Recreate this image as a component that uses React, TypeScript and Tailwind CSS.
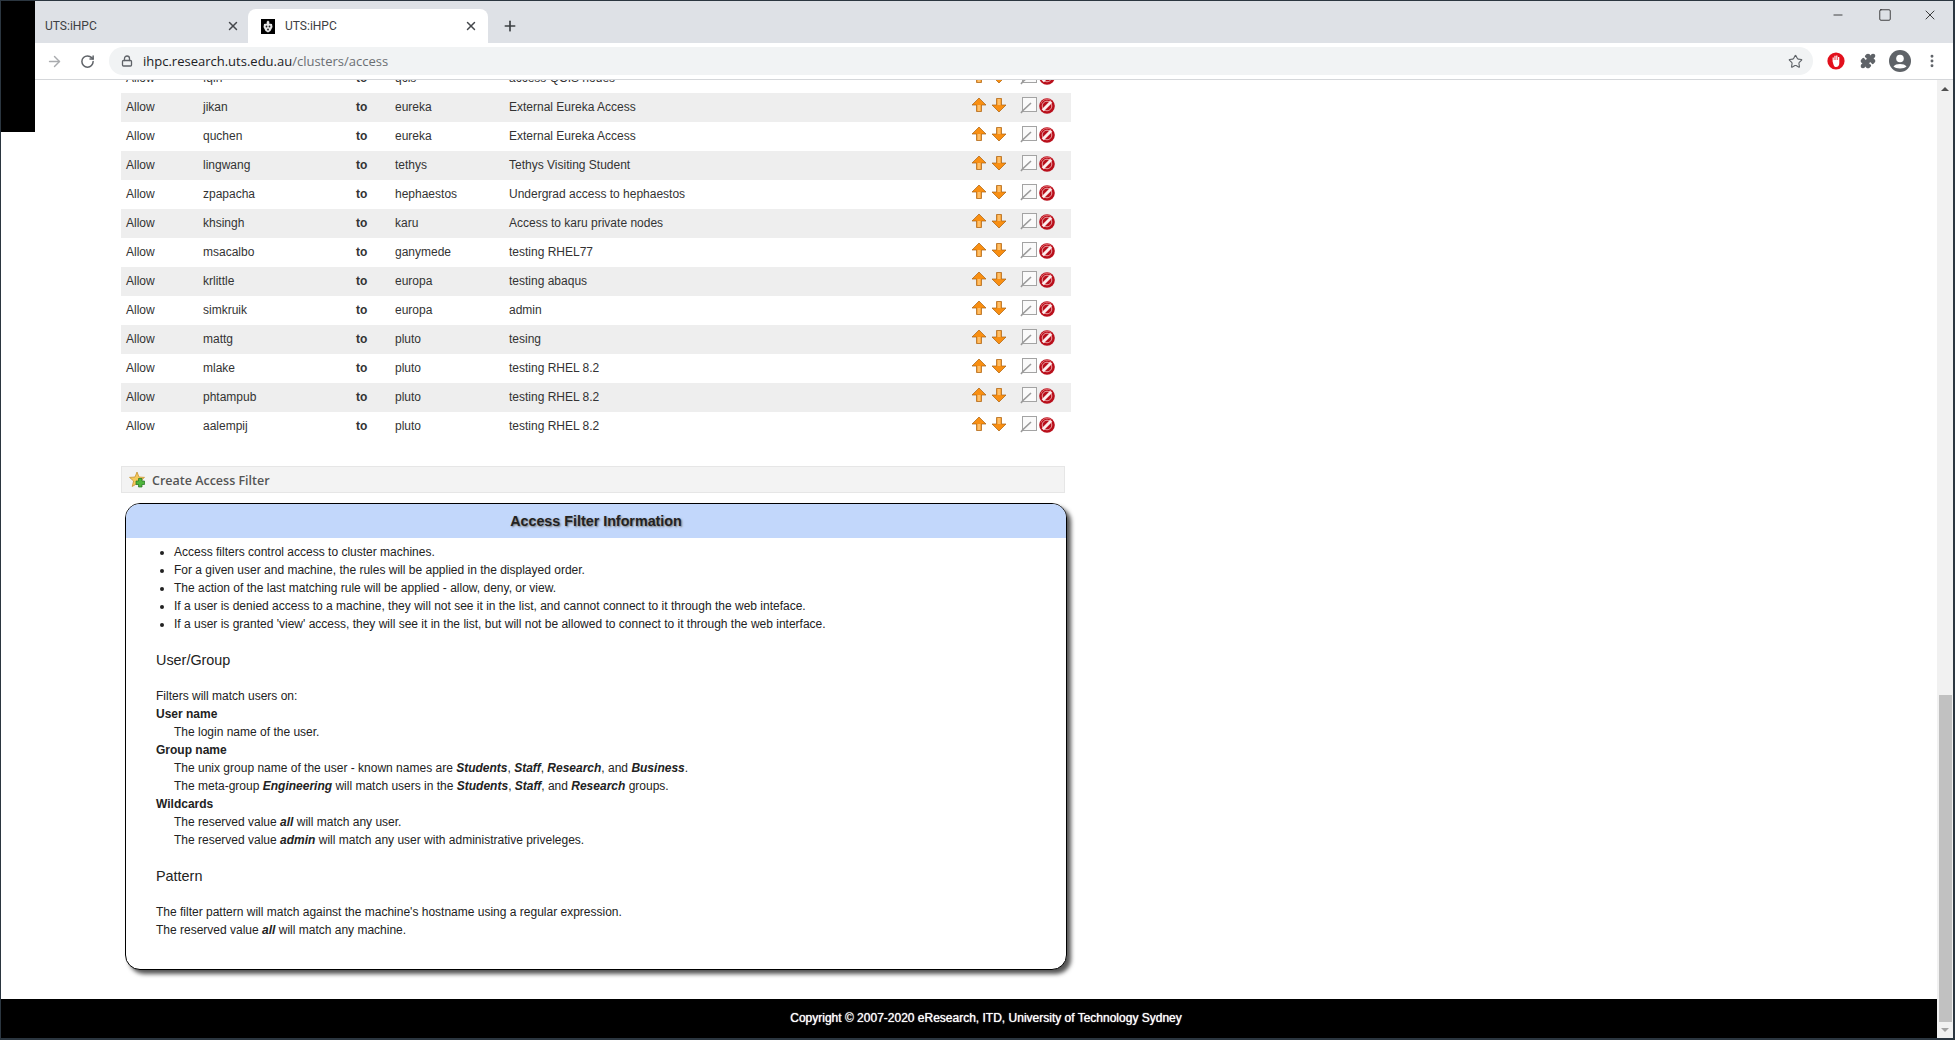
import React from "react";
import { ArrowRight, RotateCw, Lock, Star, X, Plus, Minus, Square, Puzzle, MoreVertical } from "lucide-react";

const rows = [
    ["fqin", "qcis", "access QCIS nodes"],
    ["jikan", "eureka", "External Eureka Access"],
    ["quchen", "eureka", "External Eureka Access"],
    ["lingwang", "tethys", "Tethys Visiting Student"],
    ["zpapacha", "hephaestos", "Undergrad access to hephaestos"],
    ["khsingh", "karu", "Access to karu private nodes"],
    ["msacalbo", "ganymede", "testing RHEL77"],
    ["krlittle", "europa", "testing abaqus"],
    ["simkruik", "europa", "admin"],
    ["mattg", "pluto", "tesing"],
    ["mlake", "pluto", "testing RHEL 8.2"],
    ["phtampub", "pluto", "testing RHEL 8.2"],
    ["aalempij", "pluto", "testing RHEL 8.2"],
];

const bullets = [
    "Access filters control access to cluster machines.",
    "For a given user and machine, the rules will be applied in the displayed order.",
    "The action of the last matching rule will be applied - allow, deny, or view.",
    "If a user is denied access to a machine, they will not see it in the list, and cannot connect to it through the web inteface.",
    "If a user is granted 'view' access, they will see it in the list, but will not be allowed to connect to it through the web interface.",
];

const UpArrow = () => (
    <svg width="16" height="16" viewBox="0 0 16 16">
        <path d="M8 1 L15 8 L10.5 8 L10.5 14.5 L5.5 14.5 L5.5 8 L1 8 Z" fill="#f98f12" stroke="#a9600f" strokeWidth="0.7" />
        <path d="M6.5 8 L6.5 14 L9.5 14 L9.5 8 Z" fill="#fdbf6a" />
    </svg>
);

const DownArrow = () => (
    <svg width="16" height="16" viewBox="0 0 16 16">
        <path d="M8 15 L15 8 L10.5 8 L10.5 1.5 L5.5 1.5 L5.5 8 L1 8 Z" fill="#f98f12" stroke="#a9600f" strokeWidth="0.7" />
        <path d="M6.5 2 L6.5 8 L9.5 8 L9.5 2 Z" fill="#fdbf6a" />
    </svg>
);

const EditIcon = () => (
    <svg width="17" height="17" viewBox="0 0 17 17">
        <rect x="2.5" y="0.5" width="14" height="14" fill="#fafafa" stroke="#a3a3a3" />
        <path d="M1 16 L2.5 14 L11 6" fill="none" stroke="#9a9a9a" strokeWidth="1.6" />
    </svg>
);

const DeleteIcon = () => (
    <svg width="16" height="16" viewBox="0 0 16 16">
        <circle cx="8" cy="8" r="7.8" fill="#b90f1b" />
        <circle cx="8" cy="8" r="4.8" fill="none" stroke="#e8a0a4" strokeWidth="1" />
        <path d="M3.8 12.2 L12.2 3.8" stroke="#fbeeee" strokeWidth="3" />
        <path d="M2 5.5 A6.5 6.5 0 0 1 12.5 3" fill="none" stroke="#e66a70" strokeWidth="1" />
    </svg>
);

const CreateIcon = () => (
    <svg width="17" height="17" viewBox="0 0 17 17">
        <path d="M8 1 L10 6 L15.5 6.4 L11.4 10 L12.8 15.5 L8 12.6 L3.2 15.5 L4.6 10 L0.5 6.4 L6 6 Z" fill="#f4c95c" stroke="#c08a24" strokeWidth="0.7" />
        <path d="M9.5 7.5 H13 V10 H15.5 V13.5 H13 V16 H9.5 V13.5 H7 V10 H9.5 Z" fill="#4fb53c" stroke="#23701c" strokeWidth="0.7" />
    </svg>
);

const Favicon = () => (
    <svg width="14" height="15" viewBox="0 0 14 15">
        <rect width="14" height="15" fill="#000" />
        <path d="M7 1.5 L8.5 3 L8 4.5 L11 5 L11.5 8 L9.5 12 L7 13.5 L4.5 12 L2.5 8 L3 5 L6 4.5 L5.5 3 Z" fill="#e8e8e8" />
        <circle cx="5.5" cy="7.5" r="0.9" fill="#222" />
        <circle cx="8.5" cy="7.5" r="0.9" fill="#222" />
        <circle cx="7" cy="10.5" r="0.9" fill="#222" />
    </svg>
);

const StopIcon = () => (
    <svg width="18" height="18" viewBox="0 0 18 18">
        <circle cx="9" cy="9" r="8.6" fill="#e2101c" />
        <path d="M5.6 9.5 L5.6 5.5 L6.8 5.5 L6.8 8 L7.4 8 L7.4 3.8 L8.6 3.8 L8.6 8 L9.2 8 L9.2 3.4 L10.4 3.4 L10.4 8 L11 8 L11 5 L12.3 5 L12.3 11 C12.3 13.5 11 15 9 15 C7.4 15 6.8 14 5.6 9.5 Z" fill="#fff" />
    </svg>
);

const Avatar = () => (
    <svg width="22" height="22" viewBox="0 0 22 22">
        <circle cx="11" cy="11" r="11" fill="#5f6368" />
        <circle cx="11" cy="8.5" r="3.8" fill="#fff" />
        <path d="M4.5 16.5 C6.5 13.2 15.5 13.2 17.5 16.5 C15.5 19 6.5 19 4.5 16.5 Z" fill="#fff" />
    </svg>
);

const Chrome = () => (
    <div className="shrink-0">
        <div className="flex h-[42px] items-end bg-[#dee1e6] pl-[34px]">
            <div className="flex h-[34px] w-[213px] items-center pl-[10px] pr-[8px]">
                <span className="flex-1 font-['Roboto',sans-serif] text-[12px] text-[#3c4043]">UTS:iHPC</span>
                <X size={14} strokeWidth={2.5} className="text-[#45484c]" />
            </div>
            <div className="flex h-[34px] w-[240px] items-center rounded-t-lg bg-white pl-[13px] pr-[10px]">
                <Favicon />
                <span className="ml-[10px] flex-1 font-['Roboto',sans-serif] text-[12px] text-[#3c4043]">UTS:iHPC</span>
                <X size={14} strokeWidth={2.5} className="text-[#45484c]" />
            </div>
            <Plus size={16} strokeWidth={2.5} className="mb-[9px] ml-[14px] text-[#3c4043]" />
            <div className="ml-auto flex self-start text-[#111]">
                <div className="flex h-[28px] w-[46px] items-center justify-center">
                    <Minus size={14} strokeWidth={1.3} />
                </div>
                <div className="flex h-[28px] w-[46px] items-center justify-center pl-[1px]">
                    <Square size={14} strokeWidth={1.3} />
                </div>
                <div className="flex h-[28px] w-[46px] items-center justify-center">
                    <X size={16} strokeWidth={1.2} />
                </div>
            </div>
        </div>
        <div className="flex h-[37px] items-center border-b border-[#d5d7da] bg-white pl-[45px] pr-[13px]">
            <ArrowRight size={17} strokeWidth={2} className="text-[#a9abae]" />
            <RotateCw size={15} strokeWidth={2.4} className="ml-[17px] text-[#5f6368]" />
            <div className="ml-[14px] flex h-[28px] flex-1 items-center rounded-full bg-[#f1f3f4] pl-[12px] pr-[10px] font-['Open_Sans',sans-serif] text-[13px]">
                <Lock size={12} strokeWidth={2.6} className="text-[#5f6368]" />
                <span className="ml-[10px] text-[#202124]">ihpc.research.uts.edu.au</span>
                <span className="text-[#6b6f73]">/clusters/access</span>
                <Star size={15} strokeWidth={1.8} className="ml-auto text-[#5f6368]" />
            </div>
            <span className="ml-[14px]">
                <StopIcon />
            </span>
            <Puzzle size={16} fill="#5f6368" className="ml-[15px] text-[#5f6368]" />
            <span className="ml-[13px]">
                <Avatar />
            </span>
            <MoreVertical size={16} strokeWidth={2.4} className="ml-[13px] text-[#5f6368]" />
        </div>
    </div>
);

const FilterRow = ({ row, shaded }: { row: string[]; shaded: boolean }) => (
    <div
        className={
            "grid h-[29px] grid-cols-[77px_153px_39px_114px_462px_36px_1fr] items-center pb-[2px] pl-[5px] " +
            (shaded ? "bg-[#eeeeee]" : "bg-white")
        }
    >
        <span>Allow</span>
        <span>{row[0]}</span>
        <span className="font-bold">to</span>
        <span>{row[1]}</span>
        <span>{row[2]}</span>
        <span className="flex -translate-y-[2px] gap-[4px]">
            <UpArrow />
            <DownArrow />
        </span>
        <span className="flex -translate-y-[1px] items-center gap-[2px] pl-[13px]">
            <EditIcon />
            <DeleteIcon />
        </span>
    </div>
);

const AccessTable = () => (
    <div className="ml-[120px] mt-[-16px] w-[950px] text-[#333]">
        {rows.map((row, i) => (
            <FilterRow key={row[0]} row={row} shaded={i % 2 === 1} />
        ))}
    </div>
);

const InfoBox = () => (
    <div className="ml-[124px] mt-[10px] h-[467px] w-[942px] overflow-hidden rounded-[15px] border border-black bg-white text-[#222] shadow-[4px_4px_4px_#555]">
        <div className="flex h-[34px] items-center justify-center bg-[#c2d7fb] text-[14.3px] font-bold text-[#222] [text-shadow:1px_1px_2px_#777]">
            Access Filter Information
        </div>
        <ul className="ml-[48px] mt-[5px] list-disc">
            {bullets.map((b) => (
                <li key={b}>{b}</li>
            ))}
        </ul>
        <div className="pl-[30px]">
            <h3 className="mb-[18px] mt-[18px] text-[14.4px]">User/Group</h3>
            <p>Filters will match users on:</p>
            <dl>
                <dt className="font-bold">User name</dt>
                <dd className="pl-[18px]">The login name of the user.</dd>
                <dt className="font-bold">Group name</dt>
                <dd className="pl-[18px]">
                    The unix group name of the user - known names are <b><i>Students</i></b>, <b><i>Staff</i></b>, <b><i>Research</i></b>, and <b><i>Business</i></b>.
                </dd>
                <dd className="pl-[18px]">
                    The meta-group <b><i>Engineering</i></b> will match users in the <b><i>Students</i></b>, <b><i>Staff</i></b>, and <b><i>Research</i></b> groups.
                </dd>
                <dt className="font-bold">Wildcards</dt>
                <dd className="pl-[18px]">The reserved value <b><i>all</i></b> will match any user.</dd>
                <dd className="pl-[18px]">The reserved value <b><i>admin</i></b> will match any user with administrative priveleges.</dd>
            </dl>
            <h3 className="mb-[18px] mt-[18px] text-[14.4px]">Pattern</h3>
            <p>The filter pattern will match against the machine's hostname using a regular expression.</p>
            <p>The reserved value <b><i>all</i></b> will match any machine.</p>
        </div>
    </div>
);

const Scrollbar = () => (
    <div className="flex w-[16px] shrink-0 flex-col items-center bg-[#f1f1f1]">
        <div className="flex h-[17px] shrink-0 items-center justify-center">
            <div className="h-0 w-0 border-x-[4px] border-b-[4px] border-x-transparent border-b-[#505050]" />
        </div>
        <div className="flex-1" />
        <div className="h-[327px] w-[13px] bg-[#c1c1c1]" />
        <div className="flex h-[16px] shrink-0 items-center justify-center">
            <div className="h-0 w-0 border-x-[4px] border-t-[4px] border-x-transparent border-t-[#a3a3a3]" />
        </div>
    </div>
);

export default function App() {
    return (
        <div className="relative flex h-[1040px] w-[1955px] flex-col overflow-hidden border-b-2 border-l border-r-2 border-t border-[#2b3640] bg-white font-['Liberation_Sans',Arial,sans-serif] text-[12px] leading-[18px]">
            <Chrome />
            <div className="flex min-h-0 flex-1">
                <div className="flex min-w-0 flex-1 flex-col overflow-hidden">
                    <AccessTable />
                    <div className="ml-[120px] mt-[25px] flex h-[27px] w-[944px] items-center border border-[#e6e6e6] bg-[#f3f3f3] pl-[7px] font-['Open_Sans',sans-serif] text-[12.5px] font-semibold text-[#555]">
                        <CreateIcon />
                        <span className="ml-[6px] translate-y-[1px]">Create Access Filter</span>
                    </div>
                    <InfoBox />
                    <div className="mt-[29px] flex flex-1 items-center justify-center bg-black pb-[1px] pl-[34px] text-white [text-shadow:0_0_1px_#fff]">
                        Copyright © 2007-2020 eResearch, ITD, University of Technology Sydney
                    </div>
                </div>
                <Scrollbar />
            </div>
            <div className="absolute left-[-1px] top-[-1px] h-[132px] w-[35px] bg-black" />
        </div>
    );
}
